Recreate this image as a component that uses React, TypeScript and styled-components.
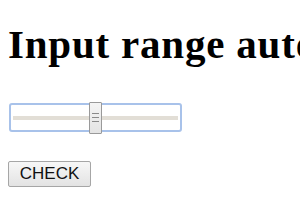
import styled, { createGlobalStyle } from 'styled-components';

const GlobalStyle = createGlobalStyle`
  body {
    margin: 0;
    background: #ffffff;
  }
`;

export default function App() {
  return (
    <>
      <GlobalStyle />
      <Page>
        <Title>Input range auto</Title>
        <RangeBox>
          <Range type="range" min={0} max={100} defaultValue={50} />
        </RangeBox>
        <CheckButton>CHECK</CheckButton>
      </Page>
    </>
  );
}

const Page = styled.div`
  display: flex;
  flex-direction: column;
  align-items: flex-start;
  padding: 22px 0 0 8px;
  overflow: hidden;
`;

const Title = styled.h1`
  margin: 0;
  font-family: 'Liberation Serif', 'Times New Roman', serif;
  font-weight: bold;
  font-size: 41px;
  letter-spacing: 0.8px;
  line-height: 44px;
  color: #000;
  white-space: nowrap;
`;

const RangeBox = styled.div`
  margin-top: 37px;
  margin-left: 1px;
`;

const Range = styled.input`
  -webkit-appearance: none;
  appearance: none;
  display: block;
  margin: 0;
  width: 173px;
  height: 29px;
  box-sizing: border-box;
  border: 2px solid #a8c2ea;
  border-radius: 3px;
  background: #fff;
  padding: 0 2px;
  outline: none;

  &::-webkit-slider-runnable-track {
    height: 4px;
    background: #e2ded6;
  }

  &::-webkit-slider-thumb {
    -webkit-appearance: none;
    width: 13px;
    height: 32px;
    margin-top: -14px;
    box-sizing: border-box;
    border: 1px solid #9a9a9a;
    border-radius: 1px;
    background:
      linear-gradient(#8a8a8a, #8a8a8a) center calc(50% - 4px) / 7px 1px no-repeat,
      linear-gradient(#8a8a8a, #8a8a8a) center 50% / 7px 1px no-repeat,
      linear-gradient(#8a8a8a, #8a8a8a) center calc(50% + 4px) / 7px 1px no-repeat,
      linear-gradient(#f4f4f4, #e4e4e4);
  }
`;

const CheckButton = styled.button`
  margin-top: 29px;
  width: 83px;
  height: 26px;
  padding: 0;
  font-family: 'Liberation Sans', Arial, sans-serif;
  font-size: 17px;
  color: #111;
  border: 1px solid #a6a6a6;
  border-radius: 2px;
  background: linear-gradient(#f7f7f7, #e3e3e3);
`;
